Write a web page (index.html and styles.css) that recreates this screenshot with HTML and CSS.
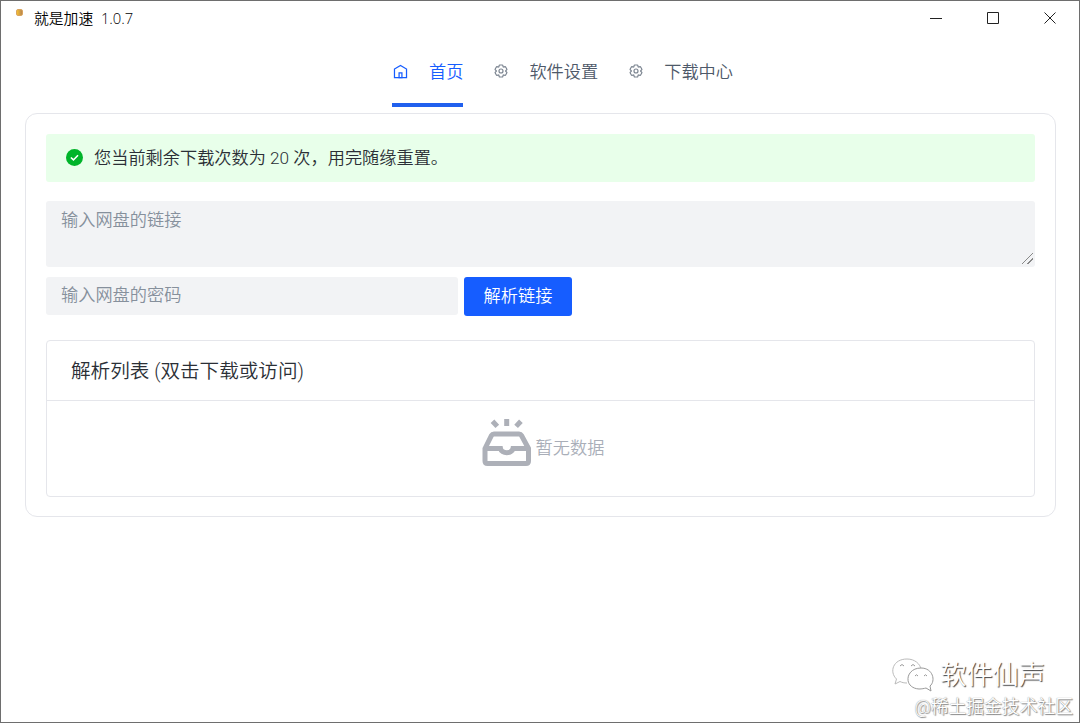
FILE: index.html
```html
<!DOCTYPE html>
<html lang="zh-CN">
<head>
  <meta charset="UTF-8" />
  <meta name="viewport" content="width=device-width, initial-scale=1.0"/>
  <title>就是加速 1.0.7</title>
  <link rel="stylesheet" href="styles.css">
</head>
<body>
  <div class="window">
    <header class="titlebar">
      <span class="app-icon"></span>
      <span class="app-title">就是加速&nbsp; 1.0.7</span>
      <div class="window-controls">
        <svg viewBox="0 0 14 14"><path d="M1 7.500h12" /></svg>
        <svg viewBox="0 0 14 14"><path d="M1.500 1.500h11v11h-11z" /></svg>
        <svg viewBox="0 0 14 14"><path d="M1.500 1.500l11 11M12.500 1.500l-11 11" /></svg>
      </div>
    </header>

    <nav class="tabs">
      <a class="tab active">
        <svg class="tab-icon" viewBox="0 0 48 48"><path d="M7 17 24 7l17 10v24H7V17Z" /><path d="M20 28h8v13h-8V28Z" /></svg>
        <span>首页</span>
      </a>
      <a class="tab">
        <svg class="tab-icon gear" viewBox="0 0 48 48"><path d="M18.797 6.732A1 1 0 0 1 19.76 6h8.48a1 1 0 0 1 .964.732l1.285 4.628a1 1 0 0 0 1.213.7l4.651-1.2a1 1 0 0 1 1.116.468l4.24 7.344a1 1 0 0 1-.153 1.2L38.193 23.3a1 1 0 0 0 0 1.402l3.364 3.427a1 1 0 0 1 .153 1.2l-4.24 7.344a1 1 0 0 1-1.116.468l-4.65-1.2a1 1 0 0 0-1.214.7l-1.285 4.628a1 1 0 0 1-.964.732h-8.48a1 1 0 0 1-.963-.732L17.51 36.64a1 1 0 0 0-1.213-.7l-4.65 1.2a1 1 0 0 1-1.116-.468l-4.24-7.344a1 1 0 0 1 .153-1.2L9.809 24.7a1 1 0 0 0 0-1.402l-3.364-3.427a1 1 0 0 1-.153-1.2l4.24-7.344a1 1 0 0 1 1.116-.468l4.65 1.2a1 1 0 0 0 1.213-.7l1.286-4.628Z" /><path d="M30 24a6 6 0 1 1-12 0 6 6 0 0 1 12 0Z" /></svg>
        <span>软件设置</span>
      </a>
      <a class="tab">
        <svg class="tab-icon gear" viewBox="0 0 48 48"><path d="M18.797 6.732A1 1 0 0 1 19.76 6h8.48a1 1 0 0 1 .964.732l1.285 4.628a1 1 0 0 0 1.213.7l4.651-1.2a1 1 0 0 1 1.116.468l4.24 7.344a1 1 0 0 1-.153 1.2L38.193 23.3a1 1 0 0 0 0 1.402l3.364 3.427a1 1 0 0 1 .153 1.2l-4.24 7.344a1 1 0 0 1-1.116.468l-4.65-1.2a1 1 0 0 0-1.214.7l-1.285 4.628a1 1 0 0 1-.964.732h-8.48a1 1 0 0 1-.963-.732L17.51 36.64a1 1 0 0 0-1.213-.7l-4.65 1.2a1 1 0 0 1-1.116-.468l-4.24-7.344a1 1 0 0 1 .153-1.2L9.809 24.7a1 1 0 0 0 0-1.402l-3.364-3.427a1 1 0 0 1-.153-1.2l4.24-7.344a1 1 0 0 1 1.116-.468l4.65 1.2a1 1 0 0 0 1.213-.7l1.286-4.628Z" /><path d="M30 24a6 6 0 1 1-12 0 6 6 0 0 1 12 0Z" /></svg>
        <span>下载中心</span>
      </a>
    </nav>

    <main class="card">
      <div class="alert">
        <svg class="alert-icon" viewBox="0 0 16 16"><circle cx="8" cy="8" r="8" /><path d="M4.600 8l2.400 2.300 4.300-4.400" /></svg>
        <span>您当前剩余下载次数为 20 次，用完随缘重置。</span>
      </div>

      <textarea class="field link-input" placeholder="输入网盘的链接"></textarea>

      <div class="form-row">
        <input class="field password-input" type="text" placeholder="输入网盘的密码" />
        <button class="btn">解析链接</button>
      </div>

      <section class="list">
        <h2 class="list-header">解析列表 (双击下载或访问)</h2>
        <div class="empty">
          <svg class="empty-icon" viewBox="0 0 50 50">
            <path d="M3 29.500 9.500 16.500Q10.300 15 12 15H37Q38.700 15 39.500 16.500L46.500 29.500V42Q46.500 44.500 44 44.500H5.500Q3 44.500 3 42ZM3 29.500H18.500C19.500 35 30 35 31 29.500H46.500" />
            <path d="M24.700 0v7M10.500 2.200l4.800 5.200M38.900 2.200l-4.800 5.200" />
          </svg>
          <span>暂无数据</span>
        </div>
      </section>
    </main>

    <div class="watermark">
      <div class="watermark-account">
        <svg viewBox="0 0 44 36">
          <path class="bubble-back" d="M16 26C13 26 11 25.500 9 24.500L4 27l1.500-5C-2 15 2 2 16 2c8 0 13 5 14 10" />
          <path d="M39 29c6-5 3-18-9-18-16 0-18 20-2 21 3 0 5-.5 7-1l5 3Z" />
          <path d="M9 9q2-3 4 0M20 9q2-3 4 0M24 19q1.500-2.500 3 0M33 19q1.500-2.500 3 0" />
        </svg>
        <span>软件仙声</span>
      </div>
      <div class="watermark-site">@稀土掘金技术社区</div>
    </div>
  </div>
</body>
</html>
```
FILE: styles.css
```css
* {
  box-sizing: border-box;
}

body {
  margin: 0;
  background-color: #fff;
  color: #2b2f36;
  font-family: Roboto, "Noto Sans CJK SC", sans-serif;
  font-size: 17.2px;
  font-weight: 350;
}

.window {
  position: relative;
  width: 100%;
  height: 100vh;
  border: 1px solid #6e6e6e;
  overflow: hidden;
}

.titlebar {
  display: flex;
  height: 35px;
  align-items: center;
  padding: 0 22px 0 15px;
}

.app-icon {
  width: 7px;
  height: 7px;
  margin-bottom: 12px;
  border: 1px solid #d9a35c;
  border-radius: 2px;
  background: linear-gradient(to right, #f5bf32, #b88650);
}

.app-title {
  margin-left: 11px;
  padding-bottom: 3px;
  color: #000;
  font-family: "Open Sans", "Noto Sans CJK SC", sans-serif;
  font-size: 14.8px;
}

.window-controls {
  display: flex;
  gap: 43px;
  margin-left: auto;
}

.window-controls svg {
  width: 14px;
  height: 14px;
  margin-top: -1px;
  fill: none;
  stroke: #222;
}

.tabs {
  display: flex;
  height: 71px;
  justify-content: center;
  gap: 30px;
  padding-left: 45px;
}

.tab {
  display: flex;
  height: 71px;
  align-items: center;
  gap: 20px;
  padding-top: 2px;
  border-bottom: 4px solid transparent;
  color: #4e5969;
}

.tab.active {
  border-color: #2160ee;
  color: #165dff;
}

.tab-icon {
  width: 17px;
  height: 17px;
  margin-top: 1px;
  fill: none;
  stroke: currentColor;
  stroke-width: 3.5;
}

.tab-icon.gear {
  width: 16px;
  height: 16px;
  margin-top: 0;
  stroke: #7b8490;
}

.card {
  height: 404px;
  margin: 6px 23px 0 24px;
  padding: 20px;
  border: 1px solid #e5e6eb;
  border-radius: 12px;
}

.alert {
  display: flex;
  height: 48px;
  align-items: center;
  gap: 11px;
  padding: 0 0 1px 20px;
  border-radius: 3px;
  background-color: #e8ffea;
}

.alert span {
  padding-bottom: 2px;
}

.alert-icon {
  width: 17px;
  height: 17px;
  fill: #00b42a;
}

.alert-icon path {
  fill: none;
  stroke: #fff;
  stroke-width: 1.5;
}

.field {
  display: block;
  border: none;
  border-radius: 3px;
  background-color: #f2f3f5;
  color: #1d2129;
  font: inherit;
}

.field::placeholder {
  color: #86909c;
}

.link-input {
  width: 100%;
  height: 66px;
  margin-top: 19px;
  padding: 5px 15px;
  resize: vertical;
}

/* two short diagonal strokes, kept clear of the corner */
.link-input::-webkit-resizer {
  background: linear-gradient(135deg, transparent 46%, #888 46%, #888 53%, transparent 53%, transparent 72%, #888 72%, #888 79%, transparent 79%) 2px 1px / 11px 11px no-repeat;
}

.form-row {
  display: flex;
  gap: 6px;
  margin-top: 10px;
}

.password-input {
  width: 412px;
  height: 38px;
  padding: 0 15px 3px;
}

.btn {
  width: 108px;
  height: 39px;
  padding: 0 0 5px;
  border: none;
  border-radius: 3px;
  background-color: #165dff;
  color: #fff;
  font: inherit;
  cursor: pointer;
}

.list {
  height: 157px;
  margin-top: 24px;
  border: 1px solid #e5e6eb;
  border-radius: 4px;
}

.list-header {
  height: 60px;
  margin: 0;
  padding-left: 24px;
  border-bottom: 1px solid #e5e6eb;
  font-size: 19.6px;
  font-weight: inherit;
  line-height: 61px;
}

.empty {
  display: flex;
  height: 92px;
  align-items: center;
  justify-content: center;
  gap: 4px;
  padding-left: 5px;
  color: #a9aeb8;
}

.empty span {
  padding-bottom: 2px;
}

.empty-icon {
  width: 50px;
  height: 50px;
  margin-top: -6px;
  fill: none;
  stroke: #adb0b8;
  stroke-width: 5;
}

.watermark {
  position: absolute;
  right: 6px;
  bottom: 1px;
  color: #fff;
  text-align: right;
}

.watermark-account {
  display: flex;
  align-items: center;
  justify-content: flex-end;
  gap: 5px;
  margin-right: 28px;
  font-size: 26.2px;
  line-height: 36px;
  text-shadow: 1px 1px 1px #444;
}

.watermark-account svg {
  width: 44px;
  height: 36px;
  fill: #fff;
  stroke: #999;
  stroke-width: 1;
}

.watermark-account .bubble-back {
  stroke: #bbb;
}

.watermark-site {
  font-size: 17.8px;
  line-height: 28px;
  text-shadow: 0 0 1px #777, 1px 1px 1px #888;
}
```
